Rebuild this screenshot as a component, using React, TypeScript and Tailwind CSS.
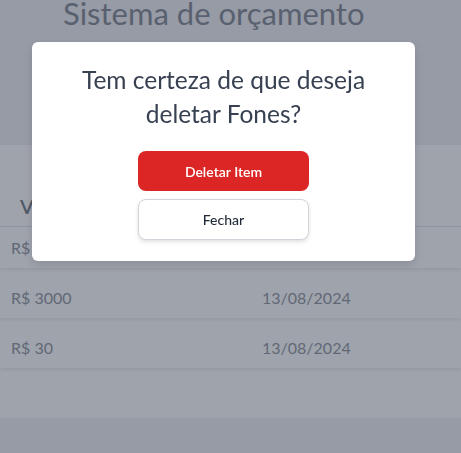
import React from "react";

export default function App() {
  const rows = [
    { valor: "R$ 150", data: "13/08/2024" },
    { valor: "R$ 3000", data: "13/08/2024" },
    { valor: "R$ 30", data: "13/08/2024" },
  ];
  return (
    <div
      className="relative flex min-h-[453px] w-[461px] flex-col overflow-hidden bg-[#e5e7eb]"
      style={{ fontFamily: "Lato, 'Noto Sans', sans-serif" }}
    >
      <div className="flex h-[145px] flex-col pl-[63px]">
        <h1 className="mt-[-5px] text-[31px] leading-[36px] text-[#374151]">Sistema de orçamento</h1>
      </div>
      <div className="h-[273px] bg-white">
        <div className="flex h-[82px] items-end border-b border-[#d1d5db] pb-[5px] pl-[20px]">
          <span className="text-[20px] font-semibold text-[#1f2937]">Valor</span>
          <span className="ml-[216px] text-[20px] font-semibold text-[#1f2937]">Data</span>
        </div>
        <div className="flex flex-col gap-[10px]">
          {rows.map((r, i) => (
            <div
              key={i}
              className={`flex items-center shadow-[0_2px_3px_rgba(0,0,0,0.12)] ${i === 0 ? "h-[41px]" : "h-[40px]"}`}
            >
              <span className="w-[262px] pl-[11px] text-[16px] text-[#4b5563]">{r.valor}</span>
              <span className="text-[16px] text-[#4b5563]">{r.data}</span>
            </div>
          ))}
        </div>
      </div>
      <div className="fixed inset-0 bg-[#6b7280]/65">
        <div className="ml-[32px] mt-[42px] flex h-[219px] w-[383px] flex-col items-center rounded-[6px] bg-white shadow-[0_4px_10px_rgba(0,0,0,0.12)]">
          <p className="mt-[21px] text-center text-[24.5px] leading-[34px] text-[#374151]">
            Tem certeza de que deseja
            <br />
            deletar Fones?
          </p>
          <button className="mt-[20px] h-[40px] w-[171px] rounded-[8px] bg-[#dc2626] text-[14px] font-semibold text-white">
            Deletar Item
          </button>
          <button className="mt-[8px] h-[41px] w-[171px] rounded-[8px] border border-[#d1d5db] bg-white text-[14px] font-medium text-[#1f2937] shadow-[0_2px_4px_rgba(0,0,0,0.12)]">
            Fechar
          </button>
        </div>
      </div>
    </div>
  );
}
